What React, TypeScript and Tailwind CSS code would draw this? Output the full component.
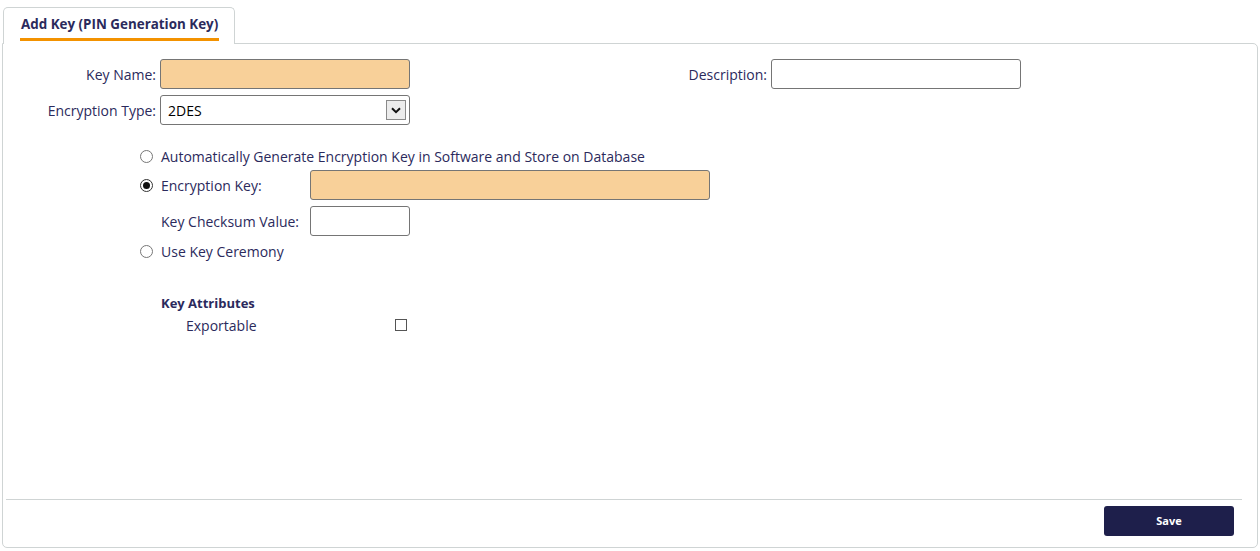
import React from "react";

export default function App() {
  const label = "text-[#2b2a5c]";
  return (
    <div className="w-[1260px] h-[551px] bg-white relative font-['Open_Sans',sans-serif] text-[14px]">
      <div className="pt-[7px] pl-[3px]">
        {/* tab */}
        <div className="flex">
          <div className="w-[232px] h-[37px] border border-b-0 border-[#cfd4d4] rounded-t-[5px] bg-white pl-[16px] pt-[7px] relative z-10 -mb-px">
            <div className="block w-fit font-bold text-[13.4px] text-[#2b2a5c] leading-[18px] border-b-[3px] border-[#f39200] pb-[5px] px-px">
              Add Key (PIN Generation Key)
            </div>
          </div>
        </div>
        {/* panel */}
        <div className="ml-[-1px] w-[1256px] h-[505px] border border-[#cfd4d4] rounded-tr-[5px] rounded-b-[5px] flex flex-col">
          <div className="flex-1 relative">
            {/* top rows */}
            <div className="flex pt-[15px]">
              <div className="w-[407px] flex flex-col gap-[6px]">
                <div className="flex items-center justify-end gap-[4px]">
                  <span className={label}>Key Name:</span>
                  <div className="w-[250px] h-[30px] bg-[#f8d099] border border-[#757575] rounded-[3px]" />
                </div>
                <div className="flex items-center justify-end gap-[4px]">
                  <span className={label}>Encryption Type:</span>
                  <div className="w-[250px] h-[30px] bg-white border border-[#757575] rounded-[3px] flex items-center justify-between pl-[7px] pr-[3px]">
                    <span className="text-black">2DES</span>
                    <div className="w-[20px] h-[20px] bg-[#ececec] border border-[#8a8a8a] flex items-center justify-center">
                      <svg width="10" height="7" viewBox="0 0 10 7">
                        <path d="M1 1.2 L5 5.2 L9 1.2" fill="none" stroke="#111" strokeWidth="2" />
                      </svg>
                    </div>
                  </div>
                </div>
              </div>
              <div className="w-[611px] flex justify-end items-start">
                <div className="flex items-center gap-[4px]">
                  <span className={label}>Description:</span>
                  <div className="w-[250px] h-[30px] bg-white border border-[#757575] rounded-[3px]" />
                </div>
              </div>
            </div>

            {/* radio section */}
            <div className="pl-[137px] pt-[19px] flex flex-col">
              <div className="flex items-center h-[24px] gap-[8px]">
                <span className="w-[13px] h-[13px] rounded-full border border-[#777] bg-white" />
                <span className={label}>Automatically Generate Encryption Key in Software and Store on Database</span>
              </div>
              <div className="flex items-center h-[30px] mt-[2px]">
                <span className="w-[13px] h-[13px] rounded-full border border-[#333] bg-white flex items-center justify-center">
                  <span className="w-[7px] h-[7px] rounded-full bg-[#111]" />
                </span>
                <span className={`${label} ml-[8px] w-[149px]`}>Encryption Key:</span>
                <div className="w-[400px] h-[30px] bg-[#f8d099] border border-[#757575] rounded-[3px]" />
              </div>
              <div className="flex items-center h-[30px] mt-[6px] pl-[21px]">
                <span className={`${label} w-[149px]`}>Key Checksum Value:</span>
                <div className="w-[100px] h-[30px] bg-white border border-[#757575] rounded-[3px]" />
              </div>
              <div className="flex items-center h-[24px] gap-[8px] mt-[3px]">
                <span className="w-[13px] h-[13px] rounded-full border border-[#777] bg-white" />
                <span className={label}>Use Key Ceremony</span>
              </div>
            </div>

            {/* attributes */}
            <div className="pl-[158px] pt-[31px]">
              <div className={`${label} font-bold text-[13px] leading-[18px]`}>Key Attributes</div>
              <div className="flex items-center h-[26px] pl-[25px]">
                <span className={`${label} w-[209px]`}>Exportable</span>
                <span className="w-[12px] h-[12px] border border-[#555] bg-white" />
              </div>
            </div>
          </div>
          {/* footer */}
          <div className="ml-[3px] mr-[15px] border-t border-[#cfd4d4] h-[48px] flex justify-end items-start pt-[6px] pr-[8px]">
            <button className="w-[130px] h-[30px] bg-[#1e1f4b] rounded-[3px] text-white font-bold text-[11px]">
              Save
            </button>
          </div>
        </div>
      </div>
    </div>
  );
}
